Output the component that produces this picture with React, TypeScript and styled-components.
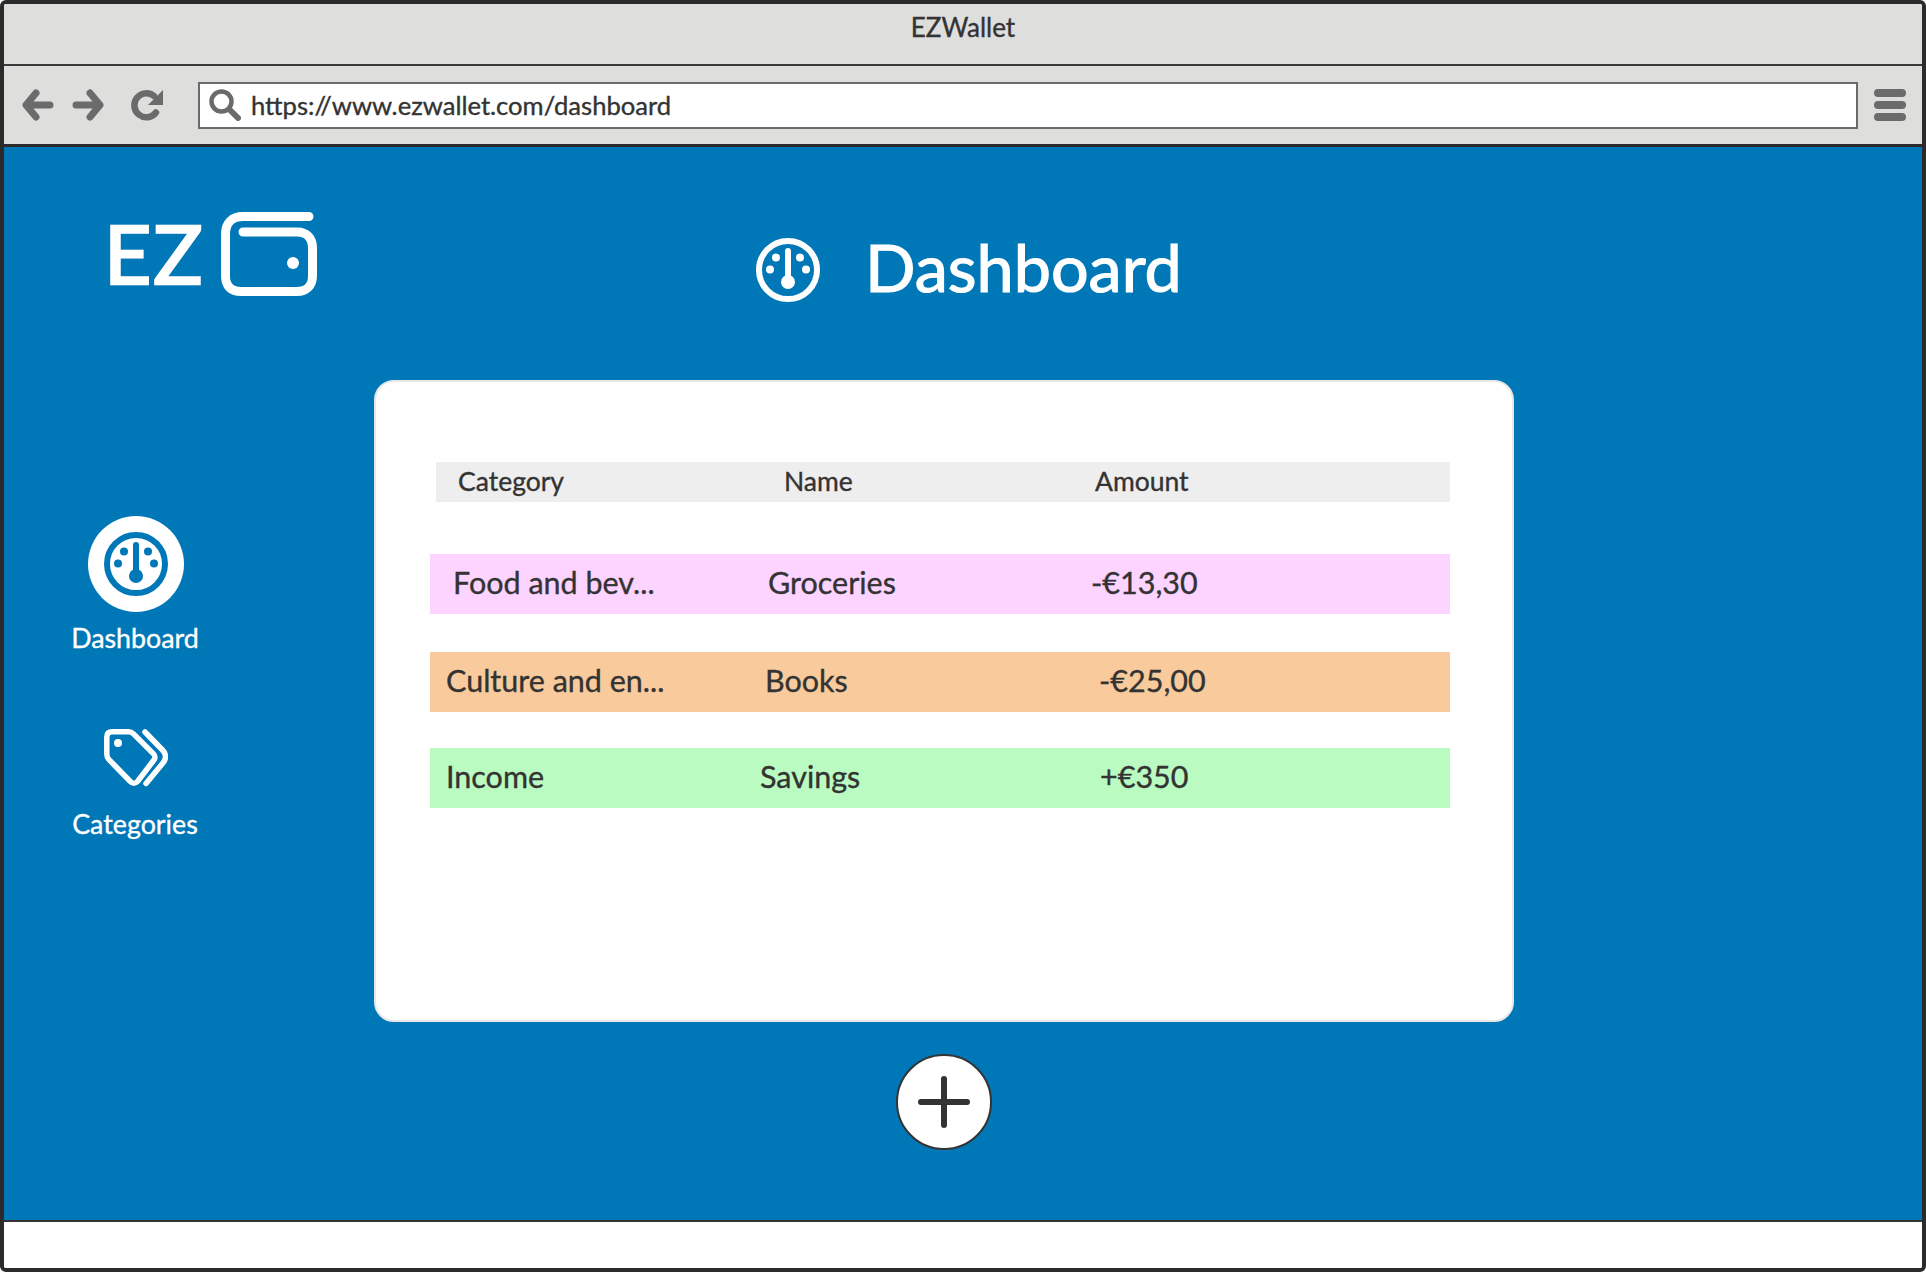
import React from 'react'
import styled, { createGlobalStyle } from 'styled-components'

const GlobalStyle = createGlobalStyle`
  html, body {
    margin: 0;
    padding: 0;
    background: #fff;
  }
  * {
    box-sizing: border-box;
  }
`

const Window = styled.div`
  width: 1926px;
  height: 1272px;
  display: flex;
  flex-direction: column;
  border: 4px solid #2b2b2b;
  border-radius: 6px;
  overflow: hidden;
  font-family: 'Lato', 'Noto Sans', sans-serif;
  color: #333;
  background: #fff;
  -webkit-text-stroke: 0.35px currentColor;
`

const TitleBar = styled.div`
  height: 62px;
  flex: none;
  display: flex;
  align-items: center;
  justify-content: center;
  padding-bottom: 14px;
  background: #dededc;
  border-bottom: 2px solid #3a3a3a;
  font-size: 26px;
`

const Toolbar = styled.div`
  height: 81px;
  flex: none;
  display: flex;
  align-items: center;
  padding: 0 16px 0 18px;
  background: #dededc;
  border-bottom: 3px solid #2b2b2b;
`

const NavIcons = styled.div`
  display: flex;
  align-items: center;
  width: 176px;
  flex: none;
`

const ToolIcon = styled.svg<{ $gap?: number }>`
  width: 32px;
  height: 32px;
  flex: none;
  margin-right: ${(p) => p.$gap ?? 0}px;
`

const AddressBar = styled.div`
  flex: 1;
  height: 47px;
  display: flex;
  align-items: center;
  gap: 10px;
  padding-left: 9px;
  background: #fff;
  border: 2px solid #6b6b6b;
  font-size: 25.6px;
`

const Hamburger = styled.div`
  width: 32px;
  margin-left: 16px;
  display: flex;
  flex-direction: column;
  gap: 4px;
  flex: none;
  span {
    height: 8px;
    border-radius: 4px;
    background: #6b6b6b;
  }
`

const Main = styled.div`
  flex: none;
  height: 1075px;
  display: flex;
  background: #0077b7;
  border-bottom: 2px solid #333;
`

const Sidebar = styled.aside`
  width: 370px;
  flex: none;
  padding: 65px 0 0 63px;
`

const Logo = styled.div`
  display: flex;
  align-items: flex-end;
  gap: 16px;
  margin-left: 37px;
  height: 84px;
  margin-bottom: 220px;
  color: #fff;
  font-size: 82px;
  line-height: 84px;
  font-weight: 400;
  letter-spacing: 2px;
  -webkit-text-stroke: 2.5px currentColor;
`

const LogoText = styled.span`
  display: block;
  height: 84px;
  transform: translateY(-2px);
`

const NavItem = styled.div`
  width: 136px;
  display: flex;
  flex-direction: column;
  align-items: center;
  color: #fff;
  margin-bottom: 65px;
`

const IconSlot = styled.div<{ $active?: boolean }>`
  width: ${(p) => (p.$active ? 96 : 80)}px;
  height: ${(p) => (p.$active ? 96 : 80)}px;
  margin-left: 2px;
  display: flex;
  align-items: center;
  justify-content: center;
  border-radius: 50%;
  background: ${(p) => (p.$active ? '#fff' : 'transparent')};
  color: ${(p) => (p.$active ? '#0077b7' : '#fff')};
`

const NavLabel = styled.div`
  margin-top: 11px;
  font-size: 26.8px;
  line-height: 30px;
  white-space: nowrap;
`

const Content = styled.main`
  width: 1140px;
  flex: none;
  display: flex;
  flex-direction: column;
`

const PageHeader = styled.header`
  height: 233px;
  display: flex;
  align-items: flex-start;
  gap: 45px;
  padding: 91px 0 0 382px;
  color: #fff;
`

const PageTitle = styled.h1`
  margin: 0;
  font-size: 66.5px;
  line-height: 56px;
  font-weight: 400;
  -webkit-text-stroke: 1.2px currentColor;
`

const Card = styled.section`
  height: 642px;
  padding: 80px 62px 0 54px;
  background: #fff;
  border: 2px solid #e8e8e8;
  border-radius: 20px;
`

const Row = styled.div<{ $bg: string; $top: number; $cols: string; $pad: number }>`
  display: grid;
  grid-template-columns: ${(p) => p.$cols};
  align-items: center;
  height: 60px;
  margin-top: ${(p) => p.$top}px;
  padding-left: ${(p) => p.$pad}px;
  padding-bottom: 4px;
  background: ${(p) => p.$bg};
  font-size: 30.5px;
  white-space: nowrap;
`

const HeaderRow = styled(Row)`
  height: 40px;
  margin-left: 6px;
  padding-bottom: 3px;
  font-size: 26.5px;
`

const AddButton = styled.button`
  width: 96px;
  height: 96px;
  margin: 32px auto 0;
  padding: 0;
  display: flex;
  align-items: center;
  justify-content: center;
  border: 2px solid #333;
  border-radius: 50%;
  background: #fff;
  color: #333;
`

const BottomBar = styled.div`
  flex: 1;
  background: #fff;
`

const GaugeIcon = ({ size }: { size: number }) => (
  <svg width={size} height={size} viewBox="0 0 64 64" fill="none">
    <circle cx="32" cy="32" r="29" stroke="currentColor" strokeWidth="6" />
    <path d="M32 13v27" stroke="currentColor" strokeWidth="6" strokeLinecap="round" />
    <circle cx="32" cy="44" r="7" fill="currentColor" />
    <circle cx="20" cy="19.5" r="4" fill="currentColor" />
    <circle cx="44" cy="19.5" r="4" fill="currentColor" />
    <circle cx="14" cy="31.5" r="4" fill="currentColor" />
    <circle cx="50" cy="31.5" r="4" fill="currentColor" />
  </svg>
)

const TagsIcon = () => (
  <svg width="64" height="58" viewBox="0 0 64 58" fill="none" stroke="currentColor" strokeWidth="5.5" strokeLinecap="round" strokeLinejoin="round">
    <path d="M8 2.8h16.5c2 0 3.6.7 5 2.1l20 20c2 2 2 4.6 0 6.6L33.5 52.5c-2.2 2.4-5 2.4-7.2 0L4.6 30.2C3.2 28.8 2.8 27.2 2.8 25V8c0-3.4 1.9-5.2 5.2-5.2z" />
    <path d="M41 3l17.5 18c4 4 4 9 0 13.5L42 54.5" />
    <circle cx="14" cy="14" r="4" fill="currentColor" stroke="none" />
  </svg>
)

const rows = [
  { bg: '#fdd4ff', top: 52, pad: 23, cols: '315px 323px 1fr', cells: ['Food and bev...', 'Groceries', '-€13,30'] },
  { bg: '#f9ca9b', top: 38, pad: 16, cols: '319px 334px 1fr', cells: ['Culture and en...', 'Books', '-€25,00'] },
  { bg: '#b9fbc0', top: 36, pad: 16, cols: '314px 340px 1fr', cells: ['Income', 'Savings', '+€350'] },
]

export default function App() {
  return (
    <>
      <GlobalStyle />
      <Window>
        <TitleBar>EZWallet</TitleBar>
        <Toolbar>
          <NavIcons>
            <ToolIcon $gap={18} viewBox="0 0 32 32" fill="none" stroke="#6b6b6b" strokeWidth="7" strokeLinecap="round" strokeLinejoin="round">
              <path d="M14 4L4 16l10 12M5 16h23" />
            </ToolIcon>
            <ToolIcon $gap={27} viewBox="0 0 32 32" fill="none" stroke="#6b6b6b" strokeWidth="7" strokeLinecap="round" strokeLinejoin="round">
              <path d="M18 4l10 12-10 12M27 16H4" />
            </ToolIcon>
            <ToolIcon viewBox="0 0 32 32" fill="none">
              <path d="M25 23.5A12 12 0 1 1 23 7" stroke="#6b6b6b" strokeWidth="6.5" strokeLinecap="round" />
              <path d="M32 1v15H17z" fill="#6b6b6b" />
            </ToolIcon>
          </NavIcons>
          <AddressBar>
            <ToolIcon viewBox="0 0 32 32" fill="none" stroke="#6b6b6b" strokeLinecap="round">
              <circle cx="12.5" cy="12.5" r="10" strokeWidth="4.5" />
              <path d="M20.5 20.5L29 29" strokeWidth="6" />
            </ToolIcon>
            https://www.ezwallet.com/dashboard
          </AddressBar>
          <Hamburger>
            <span />
            <span />
            <span />
          </Hamburger>
        </Toolbar>
        <Main>
          <Sidebar>
            <Logo>
              <LogoText>EZ</LogoText>
              <svg width="96" height="84" viewBox="0 0 96 84" fill="none" stroke="#fff" strokeWidth="9" strokeLinecap="round">
                <path d="M88 4.5H22C11 4.5 4.5 11 4.5 22v42c0 10 5.500 15.500 15.500 15.500h56c9 0 15.500-5.500 15.500-15.500V36c0-10-5.500-16-15.500-16H22" />
                <circle cx="72" cy="51" r="6" fill="#fff" stroke="none" />
              </svg>
            </Logo>
            <NavItem>
              <IconSlot $active>
                <GaugeIcon size={64} />
              </IconSlot>
              <NavLabel>Dashboard</NavLabel>
            </NavItem>
            <NavItem>
              <IconSlot>
                <TagsIcon />
              </IconSlot>
              <NavLabel>Categories</NavLabel>
            </NavItem>
          </Sidebar>
          <Content>
            <PageHeader>
              <GaugeIcon size={64} />
              <PageTitle>Dashboard</PageTitle>
            </PageHeader>
            <Card>
              <HeaderRow $bg="#eeeeee" $top={0} $pad={22} $cols="326px 311px 1fr">
                <span>Category</span>
                <span>Name</span>
                <span>Amount</span>
              </HeaderRow>
              {rows.map((row) => (
                <Row key={row.cells[0]} $bg={row.bg} $top={row.top} $pad={row.pad} $cols={row.cols}>
                  {row.cells.map((cell) => (
                    <span key={cell}>{cell}</span>
                  ))}
                </Row>
              ))}
            </Card>
            <AddButton type="button" aria-label="Add transaction">
              <svg width="52" height="52" viewBox="0 0 52 52" stroke="currentColor" strokeWidth="6" strokeLinecap="round">
                <path d="M26 3v46M3 26h46" />
              </svg>
            </AddButton>
          </Content>
        </Main>
        <BottomBar />
      </Window>
    </>
  )
}
